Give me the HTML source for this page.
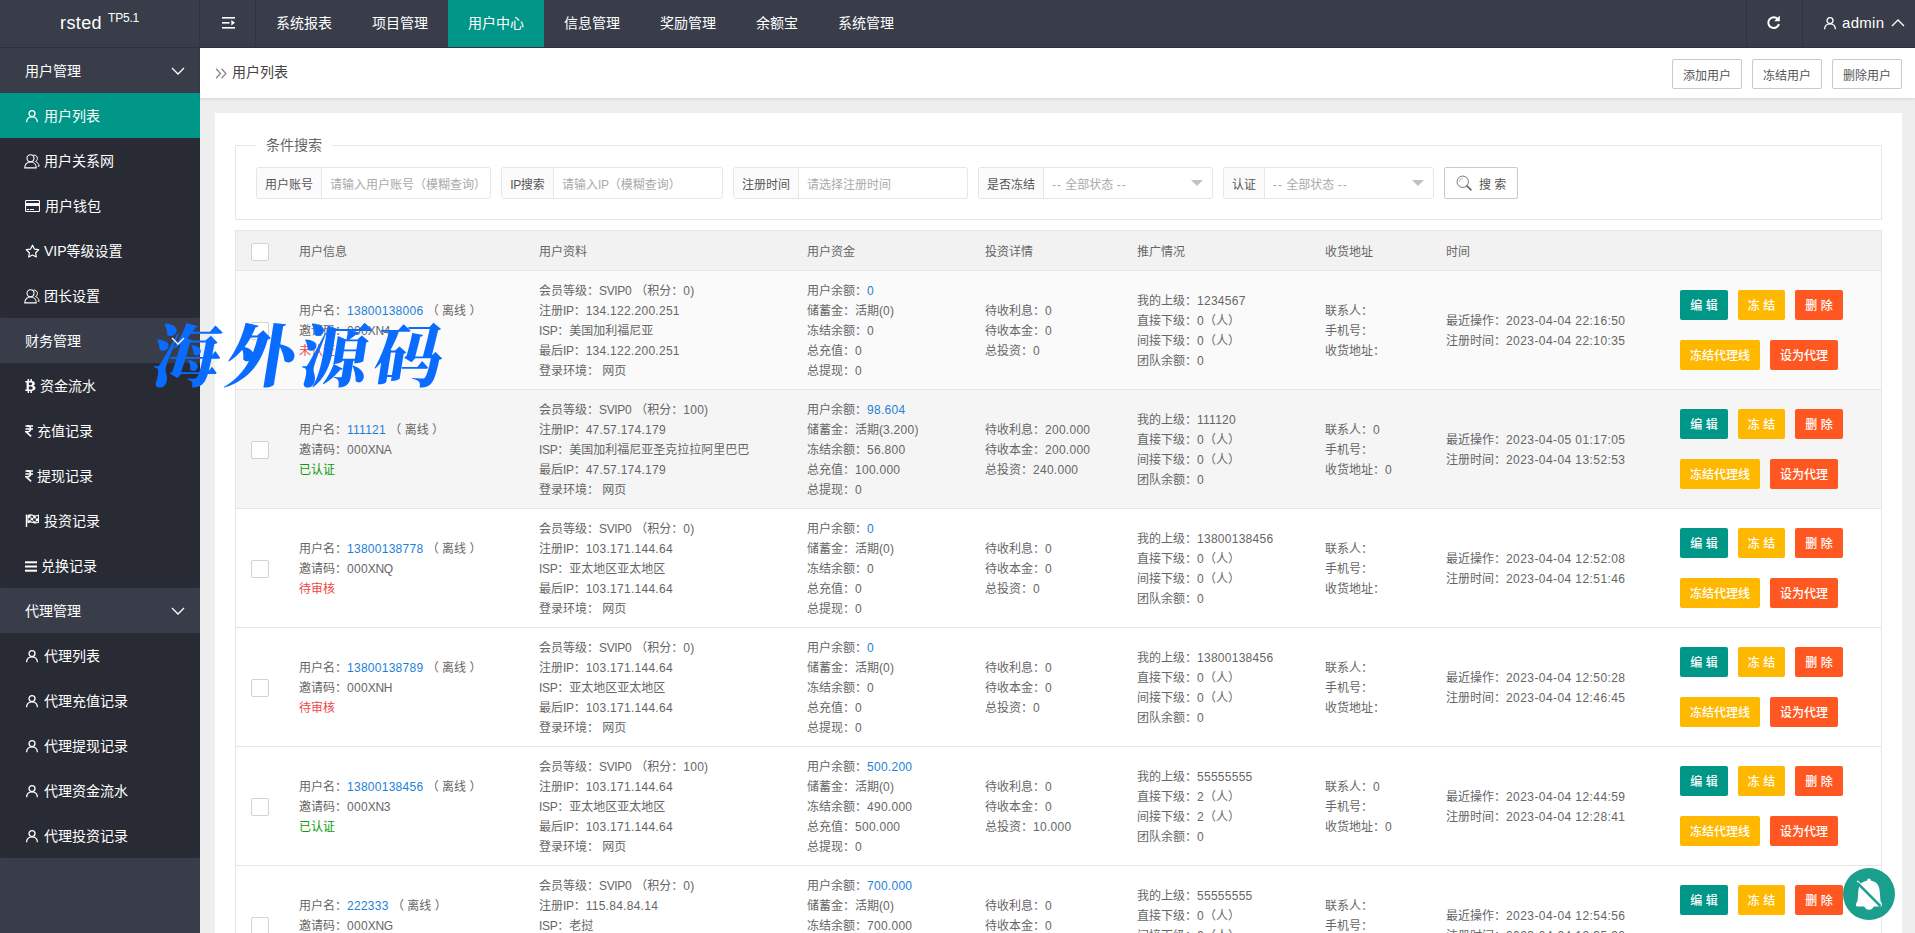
<!DOCTYPE html>
<html lang="zh-CN"><head><meta charset="utf-8"><title>用户列表</title>
<style>
*{box-sizing:border-box;margin:0;padding:0}
html,body{width:1915px;height:933px;overflow:hidden;background:#eee}
body{font-family:"Liberation Sans","Noto Sans CJK SC",sans-serif;font-size:14px;color:#333;position:relative}
.l{letter-spacing:.27px}.u{letter-spacing:-.35px}
/* header */
#hd{position:absolute;left:0;top:0;width:1915px;height:48px;background:#393D49;border-bottom:1px solid #2f323e;z-index:5}
#logo{position:absolute;left:0;top:0;width:200px;height:47px;border-right:1px solid #31343f;color:#fff;font-size:18px;line-height:46px}
#logo .lg{position:absolute;left:60px;top:0;letter-spacing:.4px}
#logo sup{position:absolute;left:108px;top:-5px;font-size:12px;line-height:46px;letter-spacing:-.2px}
#flex{position:absolute;left:200px;top:0;width:56px;height:47px;border-right:1px solid #31343f}
#flex svg{position:absolute;left:22px;top:17px}
.nv{position:absolute;top:0;height:47px;line-height:46px;text-align:center;color:#fff;font-size:14px}
.nv.on{background:#009688}
#rf{position:absolute;left:1746px;top:0;width:57px;height:47px;border-left:1px solid #31343f;border-right:1px solid #31343f}
#rf svg{position:absolute;left:19px;top:15px}
#adm{position:absolute;left:1803px;top:0;width:112px;height:47px;color:#fff}
#adm .au{position:absolute;left:20px;top:16px}
#adm .an{position:absolute;left:39px;top:0;line-height:45px;font-size:15px;letter-spacing:.3px}
#adm .ac{position:absolute;left:88px;top:19px}
/* sidebar */
#side{position:absolute;left:0;top:48px;width:200px;height:885px;background:#393D49}
.sg,.si{position:absolute;left:0;width:200px;height:45px;color:#fff;font-size:14px;line-height:47px;overflow:hidden}
#side .sg,#side .si{margin-top:-48px}
.si{background:#282B33}
.si.act{background:#009688}
.st{position:absolute;top:0;white-space:nowrap}
.sic{position:absolute;left:25px;top:0;height:45px;display:block}
.sic .ic{position:absolute;left:0;top:16px}
.sic .fa{position:absolute;left:0;top:0;font-size:14px;font-weight:bold;line-height:47px}
.chev{position:absolute;left:171px;top:19px;z-index:10}
/* main */
#main{position:absolute;left:200px;top:48px;width:1715px;height:885px}
#bc{position:absolute;left:0;top:0;width:1715px;height:50px;background:#fff;box-shadow:0 1px 3px rgba(0,0,0,.12)}
#bc .dbl{position:absolute;left:15px;top:20px}
#bc .bct{position:absolute;left:32px;top:0;line-height:49px;font-size:14px;color:#444}
.tb{position:absolute;top:11px;width:70px;height:30px;border:1px solid #C9C9C9;border-radius:2px;background:#fff;color:#555;font-size:12px;line-height:32px;text-align:center;overflow:hidden}
#card{position:absolute;left:15px;top:65px;width:1687px;height:900px;background:#fff}
#fs{position:absolute;left:20px;top:23px;width:1647px;height:84px;border:1px solid #e6e6e6;padding:0}
#fs legend{margin-left:20px;padding:0 10px;font-size:14px;color:#666;line-height:18px;height:18px}
.grp{position:absolute;top:54px;height:32px;border:1px solid #e6e6e6;border-radius:3px;background:#fff;font-size:12px;overflow:hidden}
.grp .lb{position:absolute;left:0;top:0;height:30px;line-height:34px;background:#FBFBFB;border-right:1px solid #e6e6e6;text-align:center;color:#555}
.grp .in{position:absolute;right:0;top:0;width:169px;height:30px;line-height:34px;padding-left:9px;color:#aaa;white-space:nowrap}
.grp .sel i{position:absolute;right:9px;top:12px;border:6px solid transparent;border-top-color:#c2c2c2;border-bottom:0}
#sbtn{position:absolute;left:1229px;top:54px;width:74px;height:32px;border:1px solid #C9C9C9;border-radius:2px;color:#555;font-size:12px;line-height:34px;overflow:hidden}
#sbtn svg{position:absolute;left:11px;top:7px}
#sbtn span{position:absolute;left:34px;top:0}
/* table */
#tb{position:absolute;left:20px;top:117px;width:1646px;border-collapse:separate;table-layout:fixed;border:1px solid #e6e6e6;border-right:1px solid #e6e6e6;font-size:12px;color:#666}
#tb th{height:40px;background:#f2f2f2;border-bottom:1px solid #e6e6e6;text-align:left;font-weight:normal;padding:0 15px;color:#666;font-size:12px}
#tb td{height:119px;border-bottom:1px solid #e6e6e6;padding:0 15px;vertical-align:middle}
#tb .ck{padding:0;text-align:center}
.cb{position:relative;top:1px;display:inline-block;width:18px;height:18px;border:1px solid #d2d2d2;border-radius:2px;background:#fff;vertical-align:middle}
.ln{height:20px;line-height:20px;white-space:nowrap;position:relative;top:1px}
#tb a{color:#1E7FD6}
.r{color:#f04444}.g{color:#0a9a0a}
#tb td.op{padding:0 15px}
.br{height:30px;white-space:nowrap;font-size:0;position:relative;top:0}
.br.b2{margin-top:20px}
.b{display:inline-block;height:30px;line-height:33px;overflow:hidden;font-weight:500;text-align:center;padding:0;border-radius:2px;color:#fff;font-size:12px;margin-right:10px;vertical-align:top}
.gr{background:#009688}.ye{background:#FFB800}.rd{background:#FF5722}
/* watermark */
#wm{position:absolute;left:153px;top:308px;font-family:"Liberation Serif","Noto Serif CJK SC",serif;font-weight:900;font-size:68px;letter-spacing:6px;color:#0a6cff;white-space:nowrap;z-index:9;line-height:100px;height:100px;transform:skewX(-9deg);transform-origin:50% 50%}
#bell{position:absolute;left:1843px;top:868px;width:52px;height:52px;z-index:9}

.b.w48{width:48px}.b.w47{width:47px}.b.w80{width:80px}.b.w68{width:68px}
.ds{letter-spacing:1px}
#tb th .cb{top:1.5px}
#tb th{padding-bottom:1px}
.d{letter-spacing:.42px}
.si.last{border-radius:0 0 2px 2px}.si.first{border-radius:2px 2px 0 0}

</style></head><body>
<div id="hd">
  <div id="logo"><span class="lg">rsted</span><sup>TP5.1</sup></div>
  <div id="flex"><svg width="14" height="12" viewBox="0 0 14 12"><rect x="0" y="0" width="13" height="1.600" fill="#fff"/><rect x="0" y="5" width="7.500" height="1.600" fill="#fff"/><rect x="0" y="10" width="13" height="1.600" fill="#fff"/><path d="M9.300 3l3.700 2.800-3.700 2.800z" fill="#fff"/></svg></div>
  <div class="nv" style="left:256px;width:96px">系统报表</div><div class="nv" style="left:352px;width:96px">项目管理</div><div class="nv on" style="left:448px;width:96px">用户中心</div><div class="nv" style="left:544px;width:96px">信息管理</div><div class="nv" style="left:640px;width:96px">奖励管理</div><div class="nv" style="left:736px;width:82px">余额宝</div><div class="nv" style="left:818px;width:96px">系统管理</div>
  <div id="rf"><svg width="15" height="15" viewBox="0 0 15 15"><path d="M11.800 4.100A5.400 5.400 0 1 0 12.900 9" fill="none" stroke="#fff" stroke-width="2"/><path d="M13.800 .6v5.600h-5.600z" fill="#fff"/></svg></div>
  <div id="adm"><svg class="au" width="14" height="14" viewBox="0 0 14 14"><circle cx="7" cy="4.600" r="3" fill="none" stroke="#fff" stroke-width="1.300"/><path d="M1.600 13.200c0-3.200 2.300-5.400 5.400-5.400s5.400 2.200 5.400 5.400" fill="none" stroke="#fff" stroke-width="1.300"/></svg><span class="an">admin</span><svg class="ac" width="14" height="8" viewBox="0 0 14 8"><path d="M1 7l6-6 6 6" fill="none" stroke="#fff" stroke-width="1.300"/></svg></div>
</div>
<div id="side">
<div class="sg" style="top:48px"><span class="st" style="left:25px">用户管理</span><svg class="chev" width="14" height="8" viewBox="0 0 14 8"><path d="M1 1l6 6 6-6" fill="none" stroke="#fff" stroke-width="1.300"/></svg></div>
<div class="si act" style="top:93px"><span class="sic"><svg class="ic" width="14" height="14" viewBox="0 0 14 14"><circle cx="7" cy="4.6" r="3" fill="none" stroke="#fff" stroke-width="1.3"/><path d="M1.6 13.2c0-3.2 2.3-5.4 5.4-5.4s5.4 2.2 5.4 5.4" fill="none" stroke="#fff" stroke-width="1.3"/></svg></span><span class="st" style="left:44px">用户列表</span></div>
<div class="si" style="top:138px"><span class="sic"><svg class="ic" style="left:-1px" width="16" height="15" viewBox="0 0 16 15"><ellipse cx="6.500" cy="4.300" rx="3.500" ry="3.500" fill="none" stroke="#fff" stroke-width="1.100"/><path d="M.7 13.900c0-3.500 2.400-5.900 5.800-5.900s5.800 2.400 5.800 5.900z" fill="none" stroke="#fff" stroke-width="1.100" stroke-linejoin="round"/><path d="M9.700 1.100c2.100-.2 3.700 1.300 3.700 3.300 0 1.400-.7 2.500-1.900 3.100 2 .7 3.400 2.400 3.700 4.700h-1.500" fill="none" stroke="#fff" stroke-width="1"/></svg></span><span class="st" style="left:44px">用户关系网</span></div>
<div class="si" style="top:183px"><span class="sic"><svg class="ic" style="top:17px" width="15" height="12" viewBox="0 0 15 12"><rect x=".5" y=".5" width="14" height="11" rx="1" fill="none" stroke="#fff" stroke-width="1.100"/><rect x=".5" y="3" width="14" height="3" fill="#fff"/><rect x="1.800" y="9" width="2.400" height="1" fill="#fff"/><rect x="5" y="9" width="4" height="1" fill="#fff"/></svg></span><span class="st" style="left:45px">用户钱包</span></div>
<div class="si" style="top:228px"><span class="sic"><svg class="ic" width="15" height="14" viewBox="0 0 15 14"><path d="M7.500 1.200l1.900 3.900 4.300.6-3.100 3 .75 4.300-3.850-2-3.850 2 .75-4.300-3.100-3 4.300-.6z" fill="none" stroke="#fff" stroke-width="1.200" stroke-linejoin="round"/></svg></span><span class="st" style="left:44px">VIP等级设置</span></div>
<div class="si last" style="top:273px"><span class="sic"><svg class="ic" style="left:-1px" width="16" height="15" viewBox="0 0 16 15"><ellipse cx="6.500" cy="4.300" rx="3.500" ry="3.500" fill="none" stroke="#fff" stroke-width="1.100"/><path d="M.7 13.900c0-3.500 2.400-5.900 5.800-5.900s5.800 2.400 5.800 5.900z" fill="none" stroke="#fff" stroke-width="1.100" stroke-linejoin="round"/><path d="M9.700 1.100c2.100-.2 3.700 1.300 3.700 3.300 0 1.400-.7 2.500-1.900 3.100 2 .7 3.400 2.400 3.700 4.700h-1.500" fill="none" stroke="#fff" stroke-width="1"/></svg></span><span class="st" style="left:44px">团长设置</span></div>
<div class="sg" style="top:318px"><span class="st" style="left:25px">财务管理</span><svg class="chev" width="14" height="8" viewBox="0 0 14 8"><path d="M1 1l6 6 6-6" fill="none" stroke="#fff" stroke-width="1.300"/></svg></div>
<div class="si first" style="top:363px"><span class="sic"><svg class="ic" style="top:16px" width="11" height="14" viewBox="0 0 11 14"><path d="M2.600 0h1.500v2h1.300V0h1.500v2.100c1.800.2 2.900 1 2.900 2.500 0 1-.5 1.700-1.400 2.100 1.300.4 2 1.200 2 2.400 0 1.700-1.300 2.600-3.500 2.800V14H5.400v-2H4.100v2H2.600v-2H.3v-1.400h1.300V3.400H.3V2h2.300zm1.200 3.500v2.700h1.700c1.100 0 1.700-.5 1.700-1.400 0-.9-.6-1.300-1.700-1.300zm0 4v3h2c1.200 0 1.900-.5 1.900-1.500S7 7.500 5.800 7.500z" fill="#fff" fill-rule="evenodd"/></svg></span><span class="st" style="left:40px">资金流水</span></div>
<div class="si" style="top:408px"><span class="sic"><svg class="ic" style="top:17px;left:-.5px" width="8.500" height="12" viewBox="0 0 10 12" preserveAspectRatio="none"><path d="M.5 .9H9.500M.5 3.900H9.500" fill="none" stroke="#fff" stroke-width="1.500"/><path d="M2.200 .9C5.200 .9 6.600 1.900 6.600 3.900C6.600 5.900 4.900 6.800 1.200 6.800L7.300 11.400" fill="none" stroke="#fff" stroke-width="1.700" stroke-linejoin="miter"/></svg></span><span class="st" style="left:37px">充值记录</span></div>
<div class="si" style="top:453px"><span class="sic"><svg class="ic" style="top:17px;left:-.5px" width="8.500" height="12" viewBox="0 0 10 12" preserveAspectRatio="none"><path d="M.5 .9H9.500M.5 3.900H9.500" fill="none" stroke="#fff" stroke-width="1.500"/><path d="M2.200 .9C5.200 .9 6.600 1.900 6.600 3.900C6.600 5.900 4.900 6.800 1.200 6.800L7.300 11.400" fill="none" stroke="#fff" stroke-width="1.700" stroke-linejoin="miter"/></svg></span><span class="st" style="left:37px">提现记录</span></div>
<div class="si" style="top:498px"><span class="sic"><svg class="ic" width="14" height="13" viewBox="0 0 14 13"><rect x=".8" y=".5" width="1.400" height="12.500" fill="#fff"/><path d="M3 1.500c2-1 3.500-.8 5.200 0 1.700.7 3.200.7 5.300-.3v7c-2 1-3.600 1-5.300.3-1.700-.8-3.200-1-5.200 0z" fill="none" stroke="#fff" stroke-width="1.100"/><path d="M3 1.500c1-.5 1.800-.7 2.600-.7v2.600c-.9 0-1.700.2-2.600.7zM5.600 3.400c.9 0 1.700.3 2.600.7v2.700c-.9-.4-1.700-.7-2.600-.7zM8.200 1.500c.9.400 1.700.6 2.600.6v2.500c-.9 0-1.700-.1-2.600-.5zM10.800 4.600c.9 0 1.700-.2 2.700-.7v2.800c-1 .5-1.800.7-2.700.7zM8.200 6.800c.9.400 1.700.6 2.600.6v1.700c-.9 0-1.700-.2-2.600-.6zM3 6.800c1-.5 1.800-.7 2.600-.7v2c-.8 0-1.600.2-2.600.7z" fill="#fff"/></svg></span><span class="st" style="left:44px">投资记录</span></div>
<div class="si last" style="top:543px"><span class="sic"><svg class="ic" style="top:18px" width="12" height="11" viewBox="0 0 12 11"><rect y=".3" width="12" height="2" fill="#fff"/><rect y="4.500" width="12" height="2" fill="#fff"/><rect y="8.700" width="12" height="2" fill="#fff"/></svg></span><span class="st" style="left:41px">兑换记录</span></div>
<div class="sg" style="top:588px"><span class="st" style="left:25px">代理管理</span><svg class="chev" width="14" height="8" viewBox="0 0 14 8"><path d="M1 1l6 6 6-6" fill="none" stroke="#fff" stroke-width="1.300"/></svg></div>
<div class="si first" style="top:633px"><span class="sic"><svg class="ic" width="14" height="14" viewBox="0 0 14 14"><circle cx="7" cy="4.6" r="3" fill="none" stroke="#fff" stroke-width="1.3"/><path d="M1.6 13.2c0-3.2 2.3-5.4 5.4-5.4s5.4 2.2 5.4 5.4" fill="none" stroke="#fff" stroke-width="1.3"/></svg></span><span class="st" style="left:44px">代理列表</span></div>
<div class="si" style="top:678px"><span class="sic"><svg class="ic" width="14" height="14" viewBox="0 0 14 14"><circle cx="7" cy="4.6" r="3" fill="none" stroke="#fff" stroke-width="1.3"/><path d="M1.6 13.2c0-3.2 2.3-5.4 5.4-5.4s5.4 2.2 5.4 5.4" fill="none" stroke="#fff" stroke-width="1.3"/></svg></span><span class="st" style="left:44px">代理充值记录</span></div>
<div class="si" style="top:723px"><span class="sic"><svg class="ic" width="14" height="14" viewBox="0 0 14 14"><circle cx="7" cy="4.6" r="3" fill="none" stroke="#fff" stroke-width="1.3"/><path d="M1.6 13.2c0-3.2 2.3-5.4 5.4-5.4s5.4 2.2 5.4 5.4" fill="none" stroke="#fff" stroke-width="1.3"/></svg></span><span class="st" style="left:44px">代理提现记录</span></div>
<div class="si" style="top:768px"><span class="sic"><svg class="ic" width="14" height="14" viewBox="0 0 14 14"><circle cx="7" cy="4.6" r="3" fill="none" stroke="#fff" stroke-width="1.3"/><path d="M1.6 13.2c0-3.2 2.3-5.4 5.4-5.4s5.4 2.2 5.4 5.4" fill="none" stroke="#fff" stroke-width="1.3"/></svg></span><span class="st" style="left:44px">代理资金流水</span></div>
<div class="si last" style="top:813px"><span class="sic"><svg class="ic" width="14" height="14" viewBox="0 0 14 14"><circle cx="7" cy="4.6" r="3" fill="none" stroke="#fff" stroke-width="1.3"/><path d="M1.6 13.2c0-3.2 2.3-5.4 5.4-5.4s5.4 2.2 5.4 5.4" fill="none" stroke="#fff" stroke-width="1.3"/></svg></span><span class="st" style="left:44px">代理投资记录</span></div>
</div>
<div id="main">
  <div id="bc"><svg class="dbl" width="12" height="11" viewBox="0 0 11 10"><path d="M1 .7l4 4.300-4 4.300M6 .7l4 4.300-4 4.300" fill="none" stroke="#888" stroke-width="1.200"/></svg><span class="bct">用户列表</span>
    <span class="tb" style="left:1472px">添加用户</span><span class="tb" style="left:1552px">冻结用户</span><span class="tb" style="left:1632px">删除用户</span>
  </div>
  <div id="card">
    <fieldset id="fs"><legend>条件搜索</legend></fieldset>
    <div class="grp" style="left:41px;width:235px"><span class="lb" style="width:65px">用户账号</span><span class="in">请输入用户账号（模糊查询）</span></div>
    <div class="grp" style="left:286px;width:222px"><span class="lb" style="width:52px"><span class="u">IP</span>搜索</span><span class="in">请输入<span class="u">IP</span>（模糊查询）</span></div>
    <div class="grp" style="left:518px;width:235px"><span class="lb" style="width:65px">注册时间</span><span class="in">请选择注册时间</span></div>
    <div class="grp" style="left:763px;width:235px"><span class="lb" style="width:65px">是否冻结</span><span class="in sel"><span class="ds">--</span> 全部状态 <span class="ds">--</span><i></i></span></div>
    <div class="grp" style="left:1008px;width:211px"><span class="lb" style="width:41px">认证</span><span class="in sel"><span class="ds">--</span> 全部状态 <span class="ds">--</span><i></i></span></div>
    <div id="sbtn"><svg width="16" height="16" viewBox="0 0 18 18"><circle cx="7.600" cy="7.600" r="6.400" fill="none" stroke="#666" stroke-width="1"/><path d="M12.300 12.300l4.500 4.500" stroke="#666" stroke-width="1.800" stroke-linecap="round"/><path d="M3.800 7.600a3.800 3.800 0 0 1 3.800-3.800" fill="none" stroke="#999" stroke-width=".8"/></svg><span>搜 索</span></div>
    <table id="tb" cellspacing="0" cellpadding="0">
      <colgroup><col style="width:48px"><col style="width:240px"><col style="width:268px"><col style="width:178px"><col style="width:152px"><col style="width:188px"><col style="width:121px"><col style="width:234px"><col style="width:216px"></colgroup>
      <thead><tr><th class="ck"><i class="cb"></i></th><th>用户信息</th><th>用户资料</th><th>用户资金</th><th>投资详情</th><th>推广情况</th><th>收货地址</th><th>时间</th><th></th></tr></thead>
      <tbody>
<tr style="background:#fafafa"><td class="ck"><i class="cb"></i></td><td><div class="ln">用户名：<a><span class="l">13800138006</span></a> （ 离线 ）</div><div class="ln">邀请码：<span class="l">000</span><span class="u">XN</span><span class="l">4</span></div><div class="ln"><span class="r">未认证</span></div></td><td><div class="ln">会员等级：<span class="u">SVIP</span><span class="l">0</span> （积分：<span class="l">0</span>)</div><div class="ln">注册<span class="u">IP</span>：<span class="l">134.122.200.251</span></div><div class="ln"><span class="u">ISP</span>：美国加利福尼亚</div><div class="ln">最后<span class="u">IP</span>：<span class="l">134.122.200.251</span></div><div class="ln">登录环境： 网页</div></td><td><div class="ln">用户余额：<a><span class="l">0</span></a></div><div class="ln">储蓄金：活期(<span class="l">0</span>)</div><div class="ln">冻结余额：<span class="l">0</span></div><div class="ln">总充值：<span class="l">0</span></div><div class="ln">总提现：<span class="l">0</span></div></td><td><div class="ln">待收利息：<span class="l">0</span></div><div class="ln">待收本金：<span class="l">0</span></div><div class="ln">总投资：<span class="l">0</span></div></td><td><div class="ln">我的上级：<span class="l">1234567</span></div><div class="ln">直接下级：<span class="l">0</span>（人）</div><div class="ln">间接下级：<span class="l">0</span>（人）</div><div class="ln">团队余额：<span class="l">0</span></div></td><td><div class="ln">联系人：</div><div class="ln">手机号：</div><div class="ln">收货地址：</div></td><td><div class="ln">最近操作：<span class="d">2023-04-04 22:16:50</span></div><div class="ln">注册时间：<span class="d">2023-04-04 22:10:35</span></div></td><td class="op"><div class="br"><span class="b gr w48">编 辑</span><span class="b ye w47">冻 结</span><span class="b rd w48">删 除</span></div><div class="br b2"><span class="b ye w80">冻结代理线</span><span class="b rd w68">设为代理</span></div></td></tr>
<tr style="background:#f5f5f5"><td class="ck"><i class="cb"></i></td><td><div class="ln">用户名：<a><span class="l">111121</span></a> （ 离线 ）</div><div class="ln">邀请码：<span class="l">000</span><span class="u">XNA</span></div><div class="ln"><span class="g">已认证</span></div></td><td><div class="ln">会员等级：<span class="u">SVIP</span><span class="l">0</span> （积分：<span class="l">100</span>)</div><div class="ln">注册<span class="u">IP</span>：<span class="l">47.57.174.179</span></div><div class="ln"><span class="u">ISP</span>：美国加利福尼亚圣克拉拉阿里巴巴</div><div class="ln">最后<span class="u">IP</span>：<span class="l">47.57.174.179</span></div><div class="ln">登录环境： 网页</div></td><td><div class="ln">用户余额：<a><span class="l">98.604</span></a></div><div class="ln">储蓄金：活期(<span class="l">3.200</span>)</div><div class="ln">冻结余额：<span class="l">56.800</span></div><div class="ln">总充值：<span class="l">100.000</span></div><div class="ln">总提现：<span class="l">0</span></div></td><td><div class="ln">待收利息：<span class="l">200.000</span></div><div class="ln">待收本金：<span class="l">200.000</span></div><div class="ln">总投资：<span class="l">240.000</span></div></td><td><div class="ln">我的上级：<span class="l">111120</span></div><div class="ln">直接下级：<span class="l">0</span>（人）</div><div class="ln">间接下级：<span class="l">0</span>（人）</div><div class="ln">团队余额：<span class="l">0</span></div></td><td><div class="ln">联系人：<span class="l">0</span></div><div class="ln">手机号：</div><div class="ln">收货地址：<span class="l">0</span></div></td><td><div class="ln">最近操作：<span class="d">2023-04-05 01:17:05</span></div><div class="ln">注册时间：<span class="d">2023-04-04 13:52:53</span></div></td><td class="op"><div class="br"><span class="b gr w48">编 辑</span><span class="b ye w47">冻 结</span><span class="b rd w48">删 除</span></div><div class="br b2"><span class="b ye w80">冻结代理线</span><span class="b rd w68">设为代理</span></div></td></tr>
<tr style="background:#fff"><td class="ck"><i class="cb"></i></td><td><div class="ln">用户名：<a><span class="l">13800138778</span></a> （ 离线 ）</div><div class="ln">邀请码：<span class="l">000</span><span class="u">XNQ</span></div><div class="ln"><span class="r">待审核</span></div></td><td><div class="ln">会员等级：<span class="u">SVIP</span><span class="l">0</span> （积分：<span class="l">0</span>)</div><div class="ln">注册<span class="u">IP</span>：<span class="l">103.171.144.64</span></div><div class="ln"><span class="u">ISP</span>：亚太地区亚太地区</div><div class="ln">最后<span class="u">IP</span>：<span class="l">103.171.144.64</span></div><div class="ln">登录环境： 网页</div></td><td><div class="ln">用户余额：<a><span class="l">0</span></a></div><div class="ln">储蓄金：活期(<span class="l">0</span>)</div><div class="ln">冻结余额：<span class="l">0</span></div><div class="ln">总充值：<span class="l">0</span></div><div class="ln">总提现：<span class="l">0</span></div></td><td><div class="ln">待收利息：<span class="l">0</span></div><div class="ln">待收本金：<span class="l">0</span></div><div class="ln">总投资：<span class="l">0</span></div></td><td><div class="ln">我的上级：<span class="l">13800138456</span></div><div class="ln">直接下级：<span class="l">0</span>（人）</div><div class="ln">间接下级：<span class="l">0</span>（人）</div><div class="ln">团队余额：<span class="l">0</span></div></td><td><div class="ln">联系人：</div><div class="ln">手机号：</div><div class="ln">收货地址：</div></td><td><div class="ln">最近操作：<span class="d">2023-04-04 12:52:08</span></div><div class="ln">注册时间：<span class="d">2023-04-04 12:51:46</span></div></td><td class="op"><div class="br"><span class="b gr w48">编 辑</span><span class="b ye w47">冻 结</span><span class="b rd w48">删 除</span></div><div class="br b2"><span class="b ye w80">冻结代理线</span><span class="b rd w68">设为代理</span></div></td></tr>
<tr style="background:#fff"><td class="ck"><i class="cb"></i></td><td><div class="ln">用户名：<a><span class="l">13800138789</span></a> （ 离线 ）</div><div class="ln">邀请码：<span class="l">000</span><span class="u">XNH</span></div><div class="ln"><span class="r">待审核</span></div></td><td><div class="ln">会员等级：<span class="u">SVIP</span><span class="l">0</span> （积分：<span class="l">0</span>)</div><div class="ln">注册<span class="u">IP</span>：<span class="l">103.171.144.64</span></div><div class="ln"><span class="u">ISP</span>：亚太地区亚太地区</div><div class="ln">最后<span class="u">IP</span>：<span class="l">103.171.144.64</span></div><div class="ln">登录环境： 网页</div></td><td><div class="ln">用户余额：<a><span class="l">0</span></a></div><div class="ln">储蓄金：活期(<span class="l">0</span>)</div><div class="ln">冻结余额：<span class="l">0</span></div><div class="ln">总充值：<span class="l">0</span></div><div class="ln">总提现：<span class="l">0</span></div></td><td><div class="ln">待收利息：<span class="l">0</span></div><div class="ln">待收本金：<span class="l">0</span></div><div class="ln">总投资：<span class="l">0</span></div></td><td><div class="ln">我的上级：<span class="l">13800138456</span></div><div class="ln">直接下级：<span class="l">0</span>（人）</div><div class="ln">间接下级：<span class="l">0</span>（人）</div><div class="ln">团队余额：<span class="l">0</span></div></td><td><div class="ln">联系人：</div><div class="ln">手机号：</div><div class="ln">收货地址：</div></td><td><div class="ln">最近操作：<span class="d">2023-04-04 12:50:28</span></div><div class="ln">注册时间：<span class="d">2023-04-04 12:46:45</span></div></td><td class="op"><div class="br"><span class="b gr w48">编 辑</span><span class="b ye w47">冻 结</span><span class="b rd w48">删 除</span></div><div class="br b2"><span class="b ye w80">冻结代理线</span><span class="b rd w68">设为代理</span></div></td></tr>
<tr style="background:#fff"><td class="ck"><i class="cb"></i></td><td><div class="ln">用户名：<a><span class="l">13800138456</span></a> （ 离线 ）</div><div class="ln">邀请码：<span class="l">000</span><span class="u">XN</span><span class="l">3</span></div><div class="ln"><span class="g">已认证</span></div></td><td><div class="ln">会员等级：<span class="u">SVIP</span><span class="l">0</span> （积分：<span class="l">100</span>)</div><div class="ln">注册<span class="u">IP</span>：<span class="l">103.171.144.64</span></div><div class="ln"><span class="u">ISP</span>：亚太地区亚太地区</div><div class="ln">最后<span class="u">IP</span>：<span class="l">103.171.144.64</span></div><div class="ln">登录环境： 网页</div></td><td><div class="ln">用户余额：<a><span class="l">500.200</span></a></div><div class="ln">储蓄金：活期(<span class="l">0</span>)</div><div class="ln">冻结余额：<span class="l">490.000</span></div><div class="ln">总充值：<span class="l">500.000</span></div><div class="ln">总提现：<span class="l">0</span></div></td><td><div class="ln">待收利息：<span class="l">0</span></div><div class="ln">待收本金：<span class="l">0</span></div><div class="ln">总投资：<span class="l">10.000</span></div></td><td><div class="ln">我的上级：<span class="l">55555555</span></div><div class="ln">直接下级：<span class="l">2</span>（人）</div><div class="ln">间接下级：<span class="l">2</span>（人）</div><div class="ln">团队余额：<span class="l">0</span></div></td><td><div class="ln">联系人：<span class="l">0</span></div><div class="ln">手机号：</div><div class="ln">收货地址：<span class="l">0</span></div></td><td><div class="ln">最近操作：<span class="d">2023-04-04 12:44:59</span></div><div class="ln">注册时间：<span class="d">2023-04-04 12:28:41</span></div></td><td class="op"><div class="br"><span class="b gr w48">编 辑</span><span class="b ye w47">冻 结</span><span class="b rd w48">删 除</span></div><div class="br b2"><span class="b ye w80">冻结代理线</span><span class="b rd w68">设为代理</span></div></td></tr>
<tr style="background:#fff"><td class="ck"><i class="cb"></i></td><td><div class="ln">用户名：<a><span class="l">222333</span></a> （ 离线 ）</div><div class="ln">邀请码：<span class="l">000</span><span class="u">XNG</span></div><div class="ln"><span class="g">已认证</span></div></td><td><div class="ln">会员等级：<span class="u">SVIP</span><span class="l">0</span> （积分：<span class="l">0</span>)</div><div class="ln">注册<span class="u">IP</span>：<span class="l">115.84.84.14</span></div><div class="ln"><span class="u">ISP</span>：老挝</div><div class="ln">最后<span class="u">IP</span>：<span class="l">115.84.84.14</span></div><div class="ln">登录环境： 网页</div></td><td><div class="ln">用户余额：<a><span class="l">700.000</span></a></div><div class="ln">储蓄金：活期(<span class="l">0</span>)</div><div class="ln">冻结余额：<span class="l">700.000</span></div><div class="ln">总充值：<span class="l">700.000</span></div><div class="ln">总提现：<span class="l">0</span></div></td><td><div class="ln">待收利息：<span class="l">0</span></div><div class="ln">待收本金：<span class="l">0</span></div><div class="ln">总投资：<span class="l">0</span></div></td><td><div class="ln">我的上级：<span class="l">55555555</span></div><div class="ln">直接下级：<span class="l">0</span>（人）</div><div class="ln">间接下级：<span class="l">0</span>（人）</div><div class="ln">团队余额：<span class="l">0</span></div></td><td><div class="ln">联系人：</div><div class="ln">手机号：</div><div class="ln">收货地址：</div></td><td><div class="ln">最近操作：<span class="d">2023-04-04 12:54:56</span></div><div class="ln">注册时间：<span class="d">2023-04-04 12:35:30</span></div></td><td class="op"><div class="br"><span class="b gr w48">编 辑</span><span class="b ye w47">冻 结</span><span class="b rd w48">删 除</span></div><div class="br b2"><span class="b ye w80">冻结代理线</span><span class="b rd w68">设为代理</span></div></td></tr>
      </tbody>
    </table>
  </div>
</div>
<div id="wm">海外源码</div>
<div id="bell"><svg width="52" height="52" viewBox="0 0 52 52"><circle cx="26" cy="26" r="26" fill="#1a9f8f"/><circle cx="26" cy="12.300" r="1.900" fill="#fff"/><path d="M26 12.500C20 12.500 15.900 16.200 15.400 22.200L14.700 31C14.500 33 14 34.500 13 35.700V37C13 37.900 13.600 38.500 14.500 38.500H37.500C38.400 38.500 39 37.900 39 37V35.700C38 34.500 37.500 33 37.300 31L36.600 22.200C36.100 16.200 32 12.500 26 12.500Z" fill="#fff"/><path d="M21.300 38h9.400c-.4 2.300-2.200 3.800-4.700 3.800s-4.300-1.500-4.700-3.800z" fill="#fff"/><path d="M14.600 13.400l4 4" stroke="#fff" stroke-width="1.500" stroke-linecap="round"/><path d="M14.300 14.900l23.200 23.200" stroke="#1a9f8f" stroke-width="2.500"/></svg></div>
</body></html>
